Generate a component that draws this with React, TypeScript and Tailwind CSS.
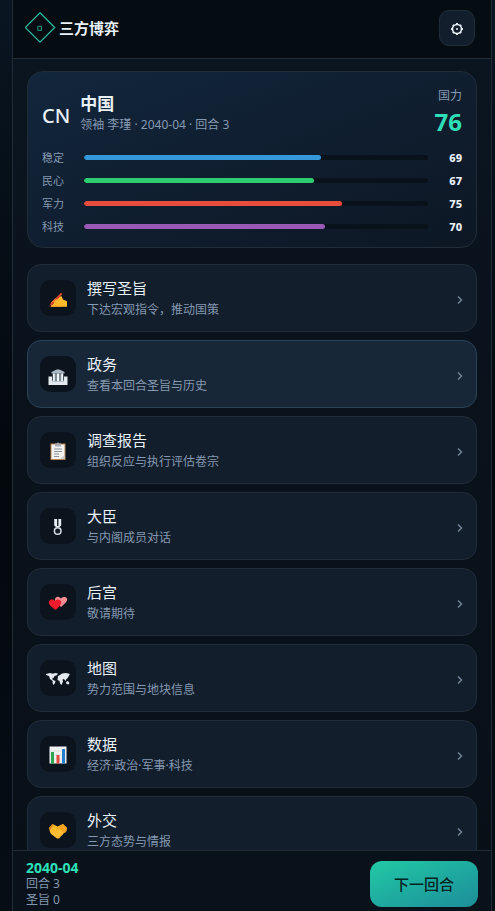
import React from "react";

type Stat = { label: string; value: number; color: string };

const stats: Stat[] = [
  { label: "稳定", value: 69, color: "bg-[#3498db]" },
  { label: "民心", value: 67, color: "bg-[#2ecc71]" },
  { label: "军力", value: 75, color: "bg-[#e74c3c]" },
  { label: "科技", value: 70, color: "bg-[#9b59b6]" },
];

const Svg = ({ children }: { children: React.ReactNode }) => (
  <svg viewBox="0 0 24 24" className="size-6" aria-hidden="true">
    {children}
  </svg>
);

const WritingIcon = () => (
  <Svg>
    <path d="M4.500 20.700 5 16.500l3.500-3.500 4-2.500 3-.3 1.500 3.300 4 1.800v5.400z" fill="#fdbb2b" />
    <path d="M7 19.500h10v1.200H5z" fill="#f5a322" />
    <path d="m15 6.800 1.500 1.200L7 18.500 3 20.700 5 17z" fill="#d9442c" />
    <path d="m7 16 3-2.800 2.500.3-3.500 3.500z" fill="#fdae2b" />
    <path d="m3 20.700 1.500-2 1 .7z" fill="#3b1a14" />
  </Svg>
);

const GovernmentIcon = () => (
  <Svg>
    <path d="M2.500 14.500H6v4h12v-4h3.500V23h-19z" fill="#e3e9ef" />
    <path d="m5.500 10 4-2 2.500-.7 2.500.7 4 2v1.500h-13z" fill="#aab9c6" />
    <path d="M6.500 11.500h11V19h-11z" fill="#7b8995" />
    <path d="M7 11.500h1.800V19H7zm4 0h2V19h-2zm4.200 0H17V19h-1.800z" fill="#f1f5f8" />
    <path d="M6 19h12v1H6z" fill="#b8c5cf" />
  </Svg>
);

const ClipboardIcon = () => (
  <Svg>
    <path d="M4.500 5.500h15V22h-15z" fill="#b78453" />
    <path d="M5.500 6.500h13V21h-13z" fill="#f3f2ef" />
    <path d="M9 5.500h2a1 1 0 0 1 2 0h2v3H9z" fill="#a9adb3" />
    <path d="M8 11h8M8 13.500h8M8 16h5M8 18.500h5" stroke="#87909b" strokeWidth="1" />
    <path d="m14.500 21 4-4v4z" fill="#c9cbd0" />
  </Svg>
);

const MedalIcon = () => (
  <Svg>
    <path d="M8.200 5h7v6.500L13.500 13h-3.600l-1.700-1.500z" fill="#e8edf3" />
    <path d="M11 5h1.500v7H11z" fill="#26303a" />
    <circle cx="11.700" cy="17" r="3.300" fill="#111b26" stroke="#d8e0e8" strokeWidth="1.500" />
  </Svg>
);

const HeartsIcon = () => (
  <Svg>
    <path d="M15 17 9.500 11.500c-1.500-2.500.5-5.500 3.500-4.500l2 1.500c1.500-2 5-2 6 0 .8 2-1 4.500-6 8.500z" fill="#f58c91" />
    <path d="M9.500 20C5 16.500 2.300 14 2.800 12c.6-2.700 4-3.300 6.200-.9 1.700-2.500 5.700-1.800 6.200.9.400 2-1.700 4.800-5.700 8z" fill="#ef1b2d" />
  </Svg>
);

const MapIcon = () => (
  <Svg>
    <path
      d="m0 8 4-1 3 .8L9 7l3 .5-1.500 2-2 .5-1 2-1.500.5 1 1.500 2.500 1-.5 2L7.500 19l-1-2 .2-2L4 13l-1-3-3-1zM14 9l2-1.500L20 7l4 1-1 1.500-1 2-1.500 1.500-1 2-1.500-2-1.500.5.5 2-1.500 3.500-1.500-1.500-.5-2.500-2-1L12 10zM20 16l2-1 1.500 2-1 1.500-2-.5z"
      fill="#e3e9ef"
    />
  </Svg>
);

const ChartIcon = () => (
  <Svg>
    <path d="M3.500 4.500h17v17h-17z" fill="#f0f1f2" />
    <path d="M3.500 9h17M3.500 13h17M3.500 17h17" stroke="#d5dade" strokeWidth=".6" />
    <path d="M5 10h3v11.500H5z" fill="#2da44e" />
    <path d="M10.500 13h3v8.500h-3z" fill="#df4b3d" />
    <path d="M16 7h3v14.500h-3z" fill="#237dcc" />
  </Svg>
);

const HandshakeIcon = () => (
  <Svg>
    <path d="m3 10 3.500-4 5 2.500L17 6l4 4-1 4-2 1-5 5.500h-2L5 16l-1-2z" fill="#fdbb2b" />
    <path d="m17 6 4 4-1 4-2.500.5-4-4-3.500 1L12 9z" fill="#f7a51f" />
    <path d="m7 15 3 3m0-3.500 3 3m-.5-5 4 4" stroke="#fdd15c" strokeWidth=".8" />
    <path d="m3 10 3.500-4 1 1L4.500 12z" fill="#dc8a18" />
  </Svg>
);

const items = [
  { title: "撰写圣旨", sub: "下达宏观指令，推动国策", Icon: WritingIcon },
  { title: "政务", sub: "查看本回合圣旨与历史", Icon: GovernmentIcon, active: true },
  { title: "调查报告", sub: "组织反应与执行评估卷宗", Icon: ClipboardIcon },
  { title: "大臣", sub: "与内阁成员对话", Icon: MedalIcon },
  { title: "后宫", sub: "敬请期待", Icon: HeartsIcon },
  { title: "地图", sub: "势力范围与地块信息", Icon: MapIcon },
  { title: "数据", sub: "经济·政治·军事·科技", Icon: ChartIcon },
  { title: "外交", sub: "三方态势与情报", Icon: HandshakeIcon },
];

export default function App() {
  return (
    <div className="h-screen bg-linear-to-b from-[#091521] via-[#03080d] to-[#060d15] pr-[3px] pl-3 font-['Noto_Sans','Noto_Sans_CJK_SC',sans-serif] text-[#e8f0f8]">
      <div className="mx-auto flex h-full max-w-[480px] flex-col border-x border-[#202d38] bg-linear-to-b from-[#0b1520] to-[#080f17]">
        <header className="flex shrink-0 items-center justify-between border-b border-[#202d38] bg-[#050c12] px-4 pt-2.5 pb-3">
          <div className="flex items-center gap-0.5">
            <svg viewBox="0 0 32 32" className="-ml-1 size-8" fill="none" aria-hidden="true">
              <path d="M15 .8 29.700 15.500 15 30.200 .3 15.500z" stroke="#2bb89a" strokeWidth="1.300" />
              <path d="M12.800 14.300h3.700v4h-3.700z" stroke="#249c83" />
            </svg>
            <h1 className="text-[15px] font-bold">三方博弈</h1>
          </div>
          <button aria-label="设置" className="flex size-9 items-center justify-center rounded-[10px] border border-[#202d38] bg-[#121e2c]">
            <svg viewBox="0 0 16 16" className="size-4" fill="none" stroke="#e8f0f8" aria-hidden="true">
              <circle cx="8" cy="9" r="4.500" strokeWidth="1.600" />
              <circle cx="8" cy="9" r="1" fill="#e8f0f8" stroke="none" />
              <path d="M8 3v1.500M8 13.500V15M2 9h1.500M12.500 9H14M3.900 4.900l1 1M11.100 12.100l1 1M3.900 13.100l1-1M11.100 5.900l1-1" strokeWidth="2" />
            </svg>
          </button>
        </header>

        <main className="flex min-h-0 flex-1 flex-col gap-4 overflow-hidden px-3.5 pt-3">
          <section className="shrink-0 rounded-2xl border border-[#202d38] bg-linear-to-br from-[#12263c] to-[#0d1724] px-3.5 pt-3.5 pb-3">
            <div className="flex items-center justify-between">
              <div className="flex items-center gap-2.5">
                <span className="pt-2 text-[20px] leading-7 font-medium">CN</span>
                <div>
                  <h2 className="text-[17px] leading-[26px] font-bold">中国</h2>
                  <p className="text-[12px] leading-4 text-[#8599b0]">领袖 李瑾 · 2040-04 · 回合 3</p>
                </div>
              </div>
              <div className="text-right">
                <p className="text-[12px] leading-5 text-[#8599b0]">国力</p>
                <p className="text-[24px] leading-8 font-bold text-[#2ee0b8]">76</p>
              </div>
            </div>
            <dl className="mt-[11px] flex flex-col gap-1.5">
              {stats.map((s) => (
                <div key={s.label} className="flex items-center">
                  <dt className="w-[42px] text-[11px] leading-[17px] text-[#8599b0]">{s.label}</dt>
                  <dd className="flex flex-1 items-center">
                    <div className="h-[5px] flex-1 overflow-hidden rounded-full bg-[#09121a]">
                      <div className={"h-full rounded-full " + s.color} style={{ width: s.value + "%" }} />
                    </div>
                    <span className="w-[34px] text-right text-[11px] leading-4 font-extrabold">{s.value}</span>
                  </dd>
                </div>
              ))}
            </dl>
          </section>

          <nav className="flex flex-col gap-2">
            {items.map(({ title, sub, Icon, active }) => (
              <button
                key={title}
                className={
                  "flex h-[68px] shrink-0 items-center gap-[11px] rounded-[14px] border px-3 text-left " +
                  (active ? "border-[#2b4258] bg-[#182737]" : "border-[#202d38] bg-[#121e2c]")
                }
              >
                <span className="flex size-9 items-center justify-center rounded-[10px] bg-[#0b131d]">
                  <Icon />
                </span>
                <span className="flex flex-1 flex-col">
                  <span className="text-[15px] leading-6">{title}</span>
                  <span className="text-[12px] leading-5 text-[#8599b0]">{sub}</span>
                </span>
                <svg viewBox="0 0 8 16" className="h-4 w-2" fill="none" stroke="#748397" strokeWidth="1.500" aria-hidden="true">
                  <path d="m2 6.500 3.500 3.500L2 13.500" />
                </svg>
              </button>
            ))}
          </nav>
        </main>

        <footer className="flex shrink-0 items-center justify-between border-t border-[#202d38] bg-[#09111b] px-[13px] pt-[9px] pb-[3px]">
          <div className="text-[12px] leading-4 text-[#8599b0]">
            <p className="text-[14px] font-bold text-[#2ee0b8]">2040-04</p>
            <p>回合 3</p>
            <p>圣旨 0</p>
          </div>
          <button className="h-[46px] rounded-xl bg-linear-to-br from-[#22c9a5] to-[#1d8d99] px-6 text-[15px] font-medium text-[#05231f]">
            下一回合
          </button>
        </footer>
      </div>
    </div>
  );
}
